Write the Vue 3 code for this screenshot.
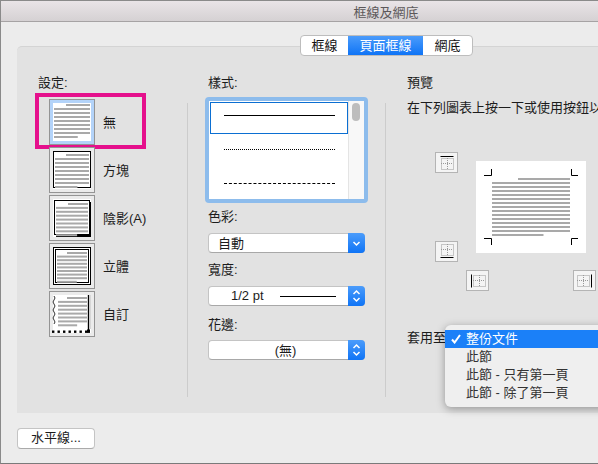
<script setup>
const settings = [
    { name: "無", type: "none", x1: 5, x2: 41, short: 17, y0: 5, step: 4, count: 9, selected: true },
    { name: "方塊", type: "box", x1: 6, x2: 40, short: 17, y0: 7, step: 4, count: 9 },
    { name: "陰影(A)", type: "shadow", x1: 7, x2: 39, short: 19, y0: 8, step: 3.9, count: 9 },
    { name: "立體", type: "double", x1: 8, x2: 38, short: 18, y0: 9, step: 3.6, count: 9 },
    { name: "自訂", type: "custom", x1: 9, x2: 38, short: 18, y0: 6, step: 3.9, count: 8 },
];

const pins = [
    { side: "top", line: [5, 4, 18, 4], grid: [6, 6, 12, 11], left: 28, top: 36 },
    { side: "bottom", line: [5, 16, 18, 16], grid: [6, 3, 12, 11], left: 28, top: 125 },
    { side: "left", line: [5, 4, 5, 17], grid: [7, 5, 12, 11], left: 59, top: 154 },
    { side: "right", line: [18, 4, 18, 17], grid: [4, 5, 12, 11], left: 166, top: 154 },
];

const applyOptions = ["整份文件", "此節", "此節 - 只有第一頁", "此節 - 除了第一頁"];

function textLines(t) {
    const lines = [];
    for (let i = 0; i < t.count; i++) {
        let x = t.x1;
        let w = t.x2 - t.x1;
        if (i === 0) {
            x = t.short;
            w = t.x2 - t.short;
        }
        if (i === t.count - 1) {
            w = (t.x2 - t.x1) * 0.66;
        }
        lines.push({ x: x, y: t.y0 + i * t.step, w: w });
    }
    return lines;
}

const previewLines = textLines({ x1: 16, x2: 94, short: 42, y0: 17, step: 4, count: 15 });

const corners = [
    "M8 14.5H15.5V8",
    "M102 14.5H95.5V8",
    "M8 77.5H15.5V84",
    "M102 77.5H95.5V84",
];

const customDots = [3, 8.5, 14, 19.5, 25, 30.5, 36];
</script>

<template>
    <div class="window">
        <div class="titlebar">框線及網底</div>
        <div class="tabs">
            <div class="tab">框線</div>
            <div class="tab active">頁面框線</div>
            <div class="tab last">網底</div>
        </div>

        <div class="panel">
            <div class="col-set">
                <div class="label set-label">設定:</div>
                <div v-for="s in settings" :key="s.type" class="set-row">
                    <svg class="thumb" width="46" height="46" viewBox="0 0 46 46">
                        <rect
                            x="0.5"
                            y="0.5"
                            width="45"
                            height="45"
                            stroke="#949494"
                            :fill="s.selected ? '#b3d3f9' : '#ebebeb'"
                        />
                        <rect x="4" y="4" width="38" height="38" fill="#fff" />
                        <rect
                            v-if="s.type === 'box'"
                            x="4.5"
                            y="4.5"
                            width="37"
                            height="36"
                            fill="none"
                            stroke="#000"
                        />
                        <g v-if="s.type === 'shadow'">
                            <rect x="5.5" y="5.5" width="35" height="34" fill="none" stroke="#000" />
                            <path d="M41 7V41H7" fill="none" stroke="#000" stroke-width="2" />
                        </g>
                        <g v-if="s.type === 'double'">
                            <rect x="4.5" y="4.5" width="37" height="37" fill="none" stroke="#000" />
                            <rect x="6.5" y="6.5" width="33" height="33" fill="none" stroke="#000" />
                        </g>
                        <g v-if="s.type === 'custom'">
                            <path
                                d="M5 5q2 2 0 4t0 4t0 4t0 4t0 4t0 4t0 4"
                                fill="none"
                                stroke="#333"
                                stroke-width="1"
                            />
                            <path d="M39.5 4V40" stroke="#000" stroke-width="1.4" />
                            <path d="M41.5 4V38" stroke="#bbb" stroke-width="0.6" />
                            <rect
                                v-for="d in customDots"
                                :key="d"
                                :x="d"
                                y="39.5"
                                width="2.4"
                                height="2.4"
                                fill="#000"
                            />
                            <rect x="38" y="38.5" width="3" height="3.4" fill="#000" />
                        </g>
                        <rect
                            v-for="(l, i) in textLines(s)"
                            :key="i"
                            :x="l.x"
                            :y="l.y"
                            :width="l.w"
                            height="2"
                            fill="#a9a9a9"
                        />
                    </svg>
                    <span class="set-name">{{ s.name }}</span>
                    <div v-if="s.selected" class="highlight"></div>
                </div>
            </div>

            <div class="divider"></div>

            <div class="col-style">
                <div class="label">樣式:</div>
                <div class="listbox">
                    <div class="list-rows">
                        <div class="line-row picked"><div class="sample solid"></div></div>
                        <div class="line-row"><div class="sample dotted"></div></div>
                        <div class="line-row"><div class="sample dashed"></div></div>
                    </div>
                    <div class="scroll"><div class="scroll-thumb"></div></div>
                </div>

                <div class="label color-label">色彩:</div>
                <div class="select">
                    <span class="select-text auto">自動</span>
                    <div class="select-btn">
                        <svg width="17" height="20" viewBox="0 0 17 20">
                            <path d="M5.5 9l3 3 3-3" fill="none" stroke="#fff" stroke-width="1.5" />
                        </svg>
                    </div>
                </div>

                <div class="label width-label">寬度:</div>
                <div class="select">
                    <span class="select-text pt">1/2 pt</span>
                    <div class="pt-line"></div>
                    <div class="select-btn">
                        <svg width="17" height="20" viewBox="0 0 17 20">
                            <path d="M5.5 8l3-3 3 3M5.5 12l3 3 3-3" fill="none" stroke="#fff" stroke-width="1.5" />
                        </svg>
                    </div>
                </div>

                <div class="label art-label">花邊:</div>
                <div class="select">
                    <span class="select-text none">(無)</span>
                    <div class="select-btn">
                        <svg width="17" height="20" viewBox="0 0 17 20">
                            <path d="M5.5 8l3-3 3 3M5.5 12l3 3 3-3" fill="none" stroke="#fff" stroke-width="1.5" />
                        </svg>
                    </div>
                </div>
            </div>

            <div class="divider second"></div>

            <div class="col-preview">
                <div class="label">預覽</div>
                <div class="label hint">在下列圖表上按一下或使用按鈕以</div>
                <div class="canvas">
                    <svg
                        v-for="p in pins"
                        :key="p.side"
                        class="pin"
                        :style="{ left: p.left + 'px', top: p.top + 'px' }"
                        width="23"
                        height="21"
                        viewBox="0 0 23 21"
                    >
                        <rect x="0.5" y="0.5" width="22" height="20" fill="#f4f4f4" stroke="#b4b4b4" />
                        <g fill="none" stroke="#999" stroke-dasharray="1 1">
                            <rect :x="p.grid[0] + 0.5" :y="p.grid[1] + 0.5" :width="p.grid[2]" :height="p.grid[3]" />
                            <path
                                :d="`M${p.grid[0] + 6.5} ${p.grid[1]}v${p.grid[3]}M${p.grid[0]} ${p.grid[1] + 5.5}h${p.grid[2]}`"
                            />
                        </g>
                        <line
                            :x1="p.line[0] + 0.5"
                            :y1="p.line[1] + 0.5"
                            :x2="p.line[2] + 0.5"
                            :y2="p.line[3] + 0.5"
                            stroke="#000"
                        />
                    </svg>
                    <svg class="page" width="110" height="92" viewBox="0 0 110 92">
                        <rect width="110" height="92" fill="#fff" />
                        <path v-for="c in corners" :key="c" :d="c" fill="none" stroke="#000" />
                        <rect
                            v-for="(l, i) in previewLines"
                            :key="i"
                            :x="l.x"
                            :y="l.y"
                            :width="l.w"
                            height="2"
                            fill="#a9a9a9"
                        />
                    </svg>
                </div>
                <div class="apply">
                    <span class="label">套用至</span>
                    <div class="menu">
                        <div
                            v-for="(o, i) in applyOptions"
                            :key="o"
                            class="menu-item"
                            :class="{ current: i === 0 }"
                        >
                            <svg v-if="i === 0" class="check" width="10" height="10" viewBox="0 0 10 10">
                                <path d="M1 5.5l2.6 3L9 1" fill="none" stroke="#fff" stroke-width="2" />
                            </svg>
                            {{ o }}
                        </div>
                    </div>
                </div>
            </div>
        </div>

        <div class="hr-btn">水平線...</div>
    </div>
</template>

<style scoped>
.window {
    position: relative;
    box-sizing: border-box;
    width: 598px;
    height: 464px;
    overflow: hidden;
    background: #ececec;
    border-top: 1px solid #8a8a8a;
    border-left: 1px solid #8a8a8a;
    border-bottom: 1px solid #7a7a7a;
    font-family: "Liberation Sans", "Noto Sans CJK TC", sans-serif;
    font-size: 13px;
    color: #1c1c1c;
}

.titlebar {
    box-sizing: border-box;
    height: 21px;
    padding-left: 173px;
    line-height: 23px;
    text-align: center;
    color: #5c585a;
    background: linear-gradient(#e9e4e7, #d5d1d3);
    border-bottom: 1px solid #a6a3a4;
}

.tabs {
    position: relative;
    z-index: 1;
    display: flex;
    width: 173px;
    height: 21px;
    box-sizing: border-box;
    margin: 13px 0 0 299px;
    background: #fff;
    border: 1px solid #bdbdbd;
    border-radius: 4px;
    overflow: hidden;
}

.tab {
    width: 47px;
    line-height: 19px;
    text-align: center;
    color: #111;
}

.tab.active {
    width: 75px;
    color: #fff;
    background: linear-gradient(#4b9cfb, #0f74f6);
}

.tab.last {
    width: 49px;
}

.panel {
    display: flex;
    box-sizing: border-box;
    height: 367px;
    margin: -10px 0 0 16px;
    padding: 28px 0 0 21px;
    background: #e2e2e2;
    border-top: 1px solid #d4d4d4;
    border-top-left-radius: 5px;
}

.label {
    height: 16px;
    line-height: 16px;
    white-space: nowrap;
}

.col-set {
    width: 149px;
    flex-shrink: 0;
}

.set-label {
    margin-bottom: 8px;
}

.set-row {
    position: relative;
    display: flex;
    align-items: center;
    height: 46px;
    margin: 0 0 2px 11px;
}

.thumb {
    flex-shrink: 0;
}

.set-name {
    margin: 0 0 2px 8px;
}

.highlight {
    position: absolute;
    left: -14px;
    top: -6px;
    box-sizing: border-box;
    width: 111px;
    height: 56px;
    border: 4px solid #e5108c;
}

.divider {
    width: 1px;
    height: 294px;
    margin-top: 28px;
    background: #cccccc;
    flex-shrink: 0;
}

.divider.second {
    margin-left: 20px;
}

.col-style {
    width: 157px;
    margin-left: 20px;
    flex-shrink: 0;
}

.listbox {
    display: flex;
    box-sizing: border-box;
    width: 163px;
    height: 106px;
    margin: 6px 0 0 -3px;
    border: 4px solid #8dbcec;
    border-radius: 4px;
    background: #fff;
}

.list-rows {
    width: 139px;
    padding: 1px 0 0 1px;
    box-sizing: border-box;
}

.line-row {
    box-sizing: border-box;
    height: 34px;
    padding: 13px 0 0 14px;
}

.line-row.picked {
    height: 32px;
    margin-bottom: 2px;
    padding: 12px 0 0 13px;
    border: 1px solid #0b6fd2;
}

.sample {
    width: 111px;
    border-top: 1px solid #000;
}

.sample.dotted {
    border-top: 1px dotted #000;
}

.sample.dashed {
    border-top: 1px dashed #000;
}

.scroll {
    width: 16px;
    box-sizing: border-box;
    padding: 2px 0 0 3px;
    background: #f8f8f8;
    border-left: 1px solid #e4e4e4;
}

.scroll-thumb {
    width: 8px;
    height: 18px;
    border-radius: 4px;
    background: #bdbdbd;
}

.color-label {
    margin-top: 6px;
}

.width-label {
    margin-top: 9px;
}

.art-label {
    margin-top: 11px;
    margin-bottom: -1px;
}

.select {
    position: relative;
    display: flex;
    align-items: center;
    box-sizing: border-box;
    height: 20px;
    margin-top: 8px;
    padding-bottom: 2px;
    background: #fff;
    border: 1px solid #c4c4c4;
    border-bottom-color: #a8a8a8;
    border-radius: 4px;
}

.select-text.auto {
    margin-left: 9px;
}

.select-text.pt {
    margin-left: 22px;
}

.select-text.none {
    flex: 1;
    padding-right: 2px;
    text-align: center;
}

.pt-line {
    width: 56px;
    height: 1px;
    margin: 2px 0 0 16px;
    background: #000;
}

.select-btn {
    position: absolute;
    right: -1px;
    top: -1px;
    width: 17px;
    height: 20px;
    border-radius: 0 4px 4px 0;
    background: linear-gradient(#4b9cfb, #0f74f6);
}

.select-btn svg {
    display: block;
}

.col-preview {
    width: 191px;
    margin-left: 21px;
    flex-shrink: 0;
}

.hint {
    margin-top: 9px;
}

.canvas {
    position: relative;
    height: 214px;
}

.pin {
    position: absolute;
}

.page {
    position: absolute;
    left: 69px;
    top: 45px;
}

.apply {
    position: relative;
}

.menu {
    position: absolute;
    left: 38px;
    top: -5px;
    z-index: 2;
    width: 170px;
    padding: 5px 0;
    box-sizing: border-box;
    background: #efefef;
    border-radius: 6px;
    box-shadow: 0 2px 9px rgba(0, 0, 0, 0.35);
}

.menu-item {
    position: relative;
    height: 18px;
    padding-left: 21px;
    line-height: 18px;
    color: #333;
    white-space: nowrap;
}

.menu-item.current {
    color: #fff;
    background: #1b80f8;
}

.check {
    position: absolute;
    left: 6px;
    top: 4px;
}

.hr-btn {
    box-sizing: border-box;
    width: 78px;
    height: 21px;
    margin: 15px 0 0 16px;
    line-height: 18px;
    text-align: center;
    background: #fff;
    border: 1px solid #c4c4c4;
    border-bottom-color: #aaaaaa;
    border-radius: 4px;
}
</style>

<style>
html,
body {
    margin: 0;
}
</style>
